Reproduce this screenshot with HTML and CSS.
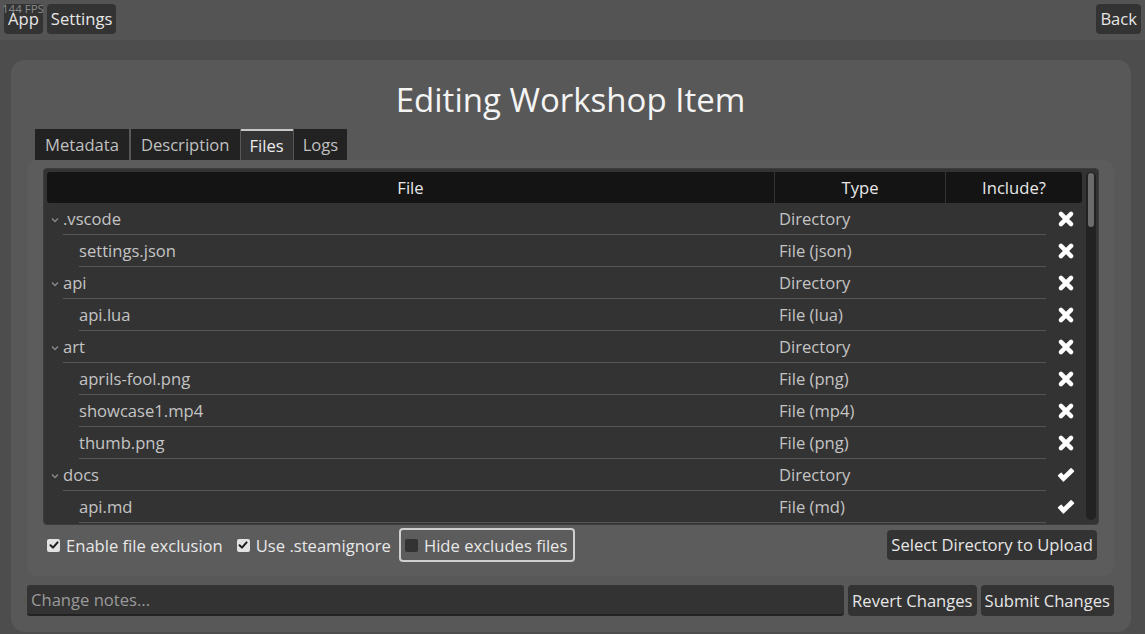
FILE: index.html
```html
<!DOCTYPE html>
<html>
<head>
<meta charset="utf-8">
<link rel="stylesheet" href="styles.css">
</head>
<body>
<div class="fps">144 FPS</div>
<header class="topbar">
  <button class="btn">App</button>
  <button class="btn">Settings</button>
  <div class="spacer"></div>
  <button class="btn">Back</button>
</header>
<main class="panel">
  <h1 class="title">Editing Workshop Item</h1>
  <nav class="tabs">
    <div class="tab">Metadata</div>
    <div class="tab">Description</div>
    <div class="tab active">Files</div>
    <div class="tab">Logs</div>
  </nav>
  <section class="inner">
    <div class="frame">
      <div class="table">
        <div class="thead">
          <div class="th th-file">File</div>
          <div class="th th-type">Type</div>
          <div class="th th-inc">Include?</div>
        </div>
        <div class="tbody">
          <div class="row dir"><span class="chev"><svg width="8" height="6" viewBox="0 0 8 6"><path d="M1 1.5 L4 4.5 L7 1.5" fill="none" stroke="#8a8a8a" stroke-width="1.3"/></svg></span><div class="cells"><span class="name">.vscode</span><span class="type">Directory</span></div><span class="inc"><svg class="ix" viewBox="0 0 16 16"><path d="M3.5 3.5 L12.5 12.5 M12.5 3.5 L3.5 12.5"/></svg></span></div>
          <div class="row child"><span class="indent"></span><div class="cells"><span class="name">settings.json</span><span class="type">File (json)</span></div><span class="inc"><svg class="ix" viewBox="0 0 16 16"><path d="M3.5 3.5 L12.5 12.5 M12.5 3.5 L3.5 12.5"/></svg></span></div>
          <div class="row dir"><span class="chev"><svg width="8" height="6" viewBox="0 0 8 6"><path d="M1 1.5 L4 4.5 L7 1.5" fill="none" stroke="#8a8a8a" stroke-width="1.3"/></svg></span><div class="cells"><span class="name">api</span><span class="type">Directory</span></div><span class="inc"><svg class="ix" viewBox="0 0 16 16"><path d="M3.5 3.5 L12.5 12.5 M12.5 3.5 L3.5 12.5"/></svg></span></div>
          <div class="row child"><span class="indent"></span><div class="cells"><span class="name">api.lua</span><span class="type">File (lua)</span></div><span class="inc"><svg class="ix" viewBox="0 0 16 16"><path d="M3.5 3.5 L12.5 12.5 M12.5 3.5 L3.5 12.5"/></svg></span></div>
          <div class="row dir"><span class="chev"><svg width="8" height="6" viewBox="0 0 8 6"><path d="M1 1.5 L4 4.5 L7 1.5" fill="none" stroke="#8a8a8a" stroke-width="1.3"/></svg></span><div class="cells"><span class="name">art</span><span class="type">Directory</span></div><span class="inc"><svg class="ix" viewBox="0 0 16 16"><path d="M3.5 3.5 L12.5 12.5 M12.5 3.5 L3.5 12.5"/></svg></span></div>
          <div class="row child"><span class="indent"></span><div class="cells"><span class="name">aprils-fool.png</span><span class="type">File (png)</span></div><span class="inc"><svg class="ix" viewBox="0 0 16 16"><path d="M3.5 3.5 L12.5 12.5 M12.5 3.5 L3.5 12.5"/></svg></span></div>
          <div class="row child"><span class="indent"></span><div class="cells"><span class="name">showcase1.mp4</span><span class="type">File (mp4)</span></div><span class="inc"><svg class="ix" viewBox="0 0 16 16"><path d="M3.5 3.5 L12.5 12.5 M12.5 3.5 L3.5 12.5"/></svg></span></div>
          <div class="row child"><span class="indent"></span><div class="cells"><span class="name">thumb.png</span><span class="type">File (png)</span></div><span class="inc"><svg class="ix" viewBox="0 0 16 16"><path d="M3.5 3.5 L12.5 12.5 M12.5 3.5 L3.5 12.5"/></svg></span></div>
          <div class="row dir"><span class="chev"><svg width="8" height="6" viewBox="0 0 8 6"><path d="M1 1.5 L4 4.5 L7 1.5" fill="none" stroke="#8a8a8a" stroke-width="1.3"/></svg></span><div class="cells"><span class="name">docs</span><span class="type">Directory</span></div><span class="inc"><svg class="ic" viewBox="0 0 16 16"><path d="M1.5 8.6 L5.6 13.2 L14.6 4.6 L12.5 2.6 L5.8 9.2 L3.8 6.6 Z"/></svg></span></div>
          <div class="row child"><span class="indent"></span><div class="cells"><span class="name">api.md</span><span class="type">File (md)</span></div><span class="inc"><svg class="ic" viewBox="0 0 16 16"><path d="M1.5 8.6 L5.6 13.2 L14.6 4.6 L12.5 2.6 L5.8 9.2 L3.8 6.6 Z"/></svg></span></div>
        </div>
      </div>
      <div class="scrollbar"><div class="thumb"></div></div>
    </div>
    <div class="controls">
      <label class="check first"><span class="box on"><svg viewBox="0 0 12 12"><path d="M2.5 6.2 L5 8.6 L9.6 3.4"/></svg></span>Enable file exclusion</label>
      <label class="check"><span class="box on"><svg viewBox="0 0 12 12"><path d="M2.5 6.2 L5 8.6 L9.6 3.4"/></svg></span>Use .steamignore</label>
      <label class="check outlined"><span class="box off"></span>Hide excludes files</label>
      <div class="spacer"></div>
      <button class="btn">Select Directory to Upload</button>
    </div>
  </section>
  <div class="footer">
    <input class="notes" type="text" placeholder="Change notes...">
    <button class="btn">Revert Changes</button>
    <button class="btn">Submit Changes</button>
  </div>
</main>
</body>
</html>
```
FILE: styles.css
```css
* { box-sizing: border-box; }
html, body { margin: 0; padding: 0; }
body {
  background: #4d4d4d;
  font-family: "Open Sans", "Noto Sans", sans-serif;
  font-size: 16.6px;
  color: #e4e4e4;
  width: 1145px;
  height: 634px;
  overflow: hidden;
}
.fps {
  position: absolute;
  left: 2px;
  top: 2px;
  font-size: 11.5px;
  line-height: 14px;
  color: #8a8a8a;
  z-index: 2;
}
.btn {
  font-family: inherit;
  font-size: 16.6px;
  color: #e6e6e6;
  background: #333333;
  border: none;
  border-radius: 4px;
  height: 30px;
  padding: 0 4px;
  line-height: 30px;
  cursor: pointer;
}
.spacer { flex: 1; }
.topbar {
  height: 40px;
  background: #545454;
  display: flex;
  align-items: flex-start;
  padding: 4px 4px 0 4px;
  gap: 4px;
}
.panel {
  margin: 20px 14px 0 11px;
  height: 572px;
  background: #585858;
  border-radius: 14px;
  padding: 0 17px 0 16px;
  display: flex;
  flex-direction: column;
}
.title {
  margin: 20px 0 0 0;
  height: 49px;
  font-size: 33px;
  font-weight: 400;
  line-height: 40px;
  text-align: center;
  color: #f4f4f4;
}
.tabs {
  display: flex;
  gap: 1px;
  margin-left: 8px;
  height: 31px;
}
.tab {
  background: #222222;
  color: #c0c0c0;
  padding: 0 10px;
  line-height: 31px;
  height: 31px;
}
.tab:first-child { margin-right: 1px; }
.tab.active {
  background: #333333;
  color: #ececec;
  border-top: 2px solid #c8c8c8;
  line-height: 29px;
  padding: 0 9px;
}
.tab:last-child { padding: 0 9px; }
.inner {
  background: #5c5c5c;
  border-radius: 10px;
  padding: 8px 15px 0 16px;
  height: 416px;
}
.frame {
  display: flex;
  background: #333333;
  border: 1px solid #3c3c3c;
  border-radius: 4px;
  padding: 3px 2px 2px 3px;
  height: 357px;
  gap: 4px;
}
.table { width: 1035px; }
.thead {
  display: flex;
  height: 31px;
  gap: 1px;
}
.th {
  background: #141414;
  color: #e8e8e8;
  text-align: center;
  line-height: 32px;
}
.th-file { width: 727px; border-radius: 3px 0 0 3px; }
.th-type { width: 170px; }
.th-inc { width: 136px; border-radius: 0 3px 3px 0; }
.row {
  display: flex;
  height: 32px;
  align-items: stretch;
}
.chev {
  width: 16px;
  display: flex;
  align-items: center;
  justify-content: center;
  padding-top: 1px;
}
.indent { width: 32px; }
.cells {
  display: flex;
  border-bottom: 1px solid #565656;
  align-items: center;
  line-height: 31px;
  color: #c4c4c4;
}
.dir .cells { width: 983px; }
.child .cells { width: 967px; }
.dir .name { width: 712px; }
.child .name { width: 696px; }
.type { padding-left: 4px; }
.inc {
  width: 36px;
  display: flex;
  align-items: center;
  justify-content: center;
  padding-left: 3px;
}
.inc svg { width: 18px; height: 18px; }
.ix { fill: none; stroke: #ffffff; stroke-width: 4; stroke-linecap: round; }
.ic { fill: #ffffff; stroke: #ffffff; stroke-width: 1.4; stroke-linejoin: round; }
.scrollbar {
  width: 10px;
  background: #222222;
  border-radius: 5px;
  margin: 0 0 2px 0;
  padding: 1px 2px;
}
.thumb {
  height: 54px;
  background: #6c6c6c;
  border-radius: 4px;
}
.controls {
  display: flex;
  align-items: center;
  height: 36px;
  margin-top: 2px;
  padding-left: 4px;
  gap: 8px;
}
.controls .btn { margin-right: 2px; }
.check {
  display: flex;
  align-items: center;
  gap: 6px;
  color: #e8e8e8;
  height: 34px;
}
.check.first { margin-right: 6px; }
.check.outlined {
  border: 2px solid #cfcfcf;
  border-radius: 4px;
  padding: 0 6px 0 4px;
}
.box {
  width: 13px;
  height: 13px;
  border-radius: 2px;
  display: inline-flex;
  align-items: center;
  justify-content: center;
}
.box.on { background: #e2e2e2; }
.box.off { background: #333333; }
.box svg { width: 12px; height: 12px; fill: none; stroke: #1a1a1a; stroke-width: 2; stroke-linecap: round; stroke-linejoin: round; }
.footer {
  display: flex;
  gap: 4px;
  margin-top: 9px;
  height: 31px;
}
.notes {
  flex: 1;
  background: #333333;
  border: none;
  border-bottom: 2px solid #222222;
  border-radius: 3px;
  color: #e6e6e6;
  font-family: inherit;
  font-size: 16.6px;
  padding: 0 4px;
  height: 31px;
  outline: none;
}
.notes::placeholder { color: #9a9a9a; }
.footer .btn { height: 31px; }
```
